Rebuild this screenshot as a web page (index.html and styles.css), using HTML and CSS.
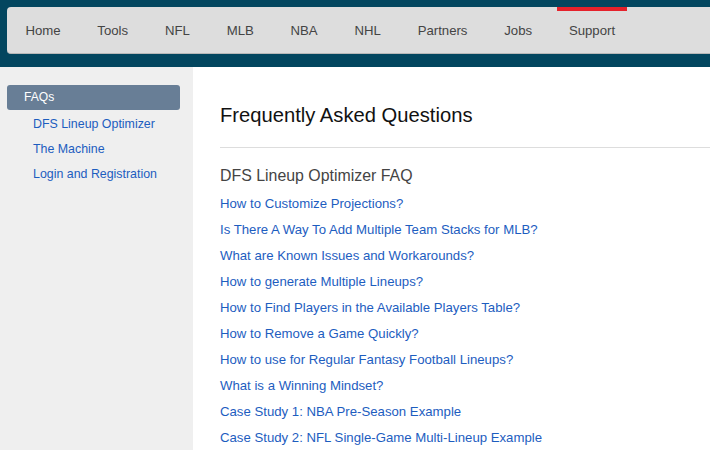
FILE: index.html
```html
<!DOCTYPE html>
<html lang="en">
<head>
<meta charset="utf-8">
<title>FAQs</title>
<link rel="stylesheet" href="styles.css">
</head>
<body>
<header class="topbar">
  <nav class="navbox">
    <a class="nav-item" href="#">Home</a>
    <a class="nav-item" href="#">Tools</a>
    <a class="nav-item" href="#">NFL</a>
    <a class="nav-item" href="#">MLB</a>
    <a class="nav-item" href="#">NBA</a>
    <a class="nav-item" href="#">NHL</a>
    <a class="nav-item" href="#">Partners</a>
    <a class="nav-item" href="#">Jobs</a>
    <a class="nav-item active" href="#">Support</a>
  </nav>
</header>
<div class="layout">
  <aside class="sidebar">
    <div class="side-title">FAQs</div>
    <a class="side-link" href="#">DFS Lineup Optimizer</a>
    <a class="side-link" href="#">The Machine</a>
    <a class="side-link" href="#">Login and Registration</a>
  </aside>
  <main class="content">
    <h1 class="page-title">Frequently Asked Questions</h1>
    <hr class="divider">
    <h2 class="section-title">DFS Lineup Optimizer FAQ</h2>
    <ul class="faq-list">
      <li><a href="#">How to Customize Projections?</a></li>
      <li><a href="#">Is There A Way To Add Multiple Team Stacks for MLB?</a></li>
      <li><a href="#">What are Known Issues and Workarounds?</a></li>
      <li><a href="#">How to generate Multiple Lineups?</a></li>
      <li><a href="#">How to Find Players in the Available Players Table?</a></li>
      <li><a href="#">How to Remove a Game Quickly?</a></li>
      <li><a href="#">How to use for Regular Fantasy Football Lineups?</a></li>
      <li><a href="#">What is a Winning Mindset?</a></li>
      <li><a href="#">Case Study 1: NBA Pre-Season Example</a></li>
      <li><a href="#">Case Study 2: NFL Single-Game Multi-Lineup Example</a></li>
    </ul>
  </main>
</div>
</body>
</html>
```

FILE: styles.css
```css
html, body {
  margin: 0;
  padding: 0;
}
body {
  font-family: "Liberation Sans", Arial, sans-serif;
  background: #ffffff;
  min-height: 100vh;
  display: flex;
  flex-direction: column;
  overflow: hidden;
}
a {
  text-decoration: none;
}
.topbar {
  background: #03465f;
  padding: 7px 0 13px 7px;
}
.navbox {
  display: flex;
  align-items: stretch;
  height: 46px;
  background: #dddddd;
  border-bottom: 1px solid #b8b8b8;
  border-radius: 4px 0 0 4px;
}
.nav-item {
  position: relative;
  display: flex;
  align-items: center;
  padding: 1px 18.4px 0;
  font-size: 13.2px;
  color: #444444;
}
.nav-item.active::before {
  content: "";
  position: absolute;
  top: 0;
  left: 6.5px;
  right: 6.5px;
  height: 4px;
  background: #e5222b;
}
.layout {
  flex: 1;
  display: flex;
}
.sidebar {
  width: 193px;
  box-sizing: border-box;
  background: #efefef;
  padding: 18px 13px 0 7px;
  flex-shrink: 0;
}
.side-title {
  height: 25px;
  line-height: 25px;
  background: #687e96;
  border-radius: 3px;
  color: #ffffff;
  font-size: 12.1px;
  padding-left: 17px;
  margin-bottom: 1.5px;
}
.side-link {
  display: block;
  padding-left: 26px;
  line-height: 25px;
  font-size: 12.4px;
  color: #1d5dbf;
}
.content {
  flex: 1;
  padding-left: 27px;
}
.page-title {
  margin: 36px 0 0;
  font-size: 20.2px;
  line-height: 24px;
  font-weight: normal;
  color: #111111;
}
.divider {
  margin: 20px 0 0;
  border: 0;
  border-top: 1px solid #dddddd;
  height: 0;
}
.section-title {
  margin: 18px 0 0;
  font-size: 15.9px;
  line-height: 20px;
  font-weight: normal;
  color: #444444;
}
.faq-list {
  list-style: none;
  margin: 4.5px 0 0;
  padding: 0;
}
.faq-list li {
  line-height: 26px;
  font-size: 13.2px;
}
.faq-list a {
  color: #1d5dbf;
}
```
